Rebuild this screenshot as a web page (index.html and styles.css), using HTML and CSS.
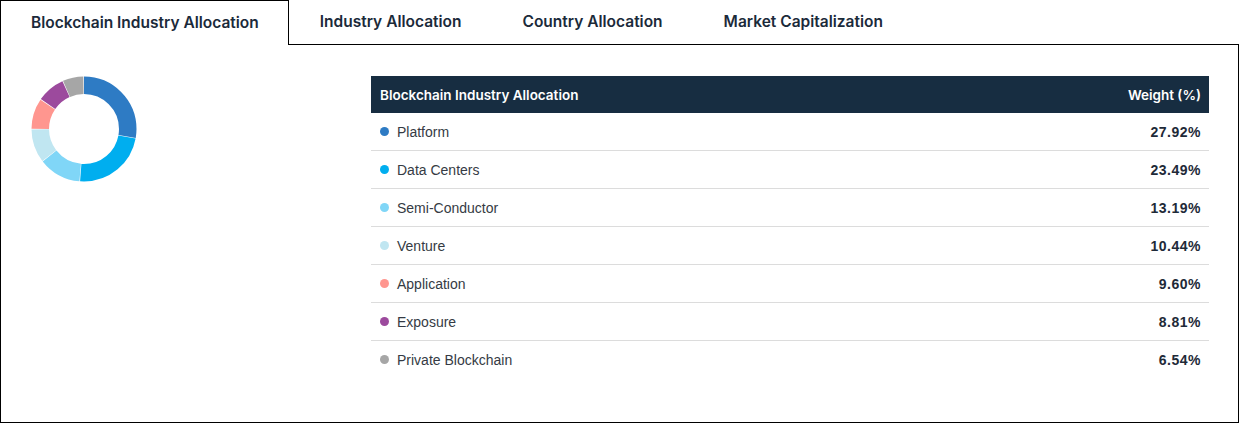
FILE: index.html
```html
<!DOCTYPE html>
<html>
  <head>
    <link rel="stylesheet" href="styles.css">
  </head>
  <body>
    <div class="tabs">
      <div class="tab active">Blockchain Industry Allocation</div>
      <div class="tab">Industry Allocation</div>
      <div class="tab">Country Allocation</div>
      <div class="tab">Market Capitalization</div>
      <div class="tabFill"></div>
    </div>
    <div class="panel">
      <div class="chart">
        <svg class="donut" width="106" height="106" viewBox="0 0 106 106">
          <g transform="rotate(-90 53 53)" fill="none" stroke-width="17.5">
            <circle cx="53" cy="53" r="43.75" pathLength="100" stroke="#2e7bc4" stroke-dasharray="27.72 100" stroke-dashoffset="0"/>
            <circle cx="53" cy="53" r="43.75" pathLength="100" stroke="#00aeef" stroke-dasharray="23.29 100" stroke-dashoffset="-27.92"/>
            <circle cx="53" cy="53" r="43.75" pathLength="100" stroke="#80d6f7" stroke-dasharray="12.99 100" stroke-dashoffset="-51.41"/>
            <circle cx="53" cy="53" r="43.75" pathLength="100" stroke="#c0e6f1" stroke-dasharray="10.24 100" stroke-dashoffset="-64.60"/>
            <circle cx="53" cy="53" r="43.75" pathLength="100" stroke="#ff968f" stroke-dasharray="9.40 100" stroke-dashoffset="-75.04"/>
            <circle cx="53" cy="53" r="43.75" pathLength="100" stroke="#9c4a9d" stroke-dasharray="8.61 100" stroke-dashoffset="-84.64"/>
            <circle cx="53" cy="53" r="43.75" pathLength="100" stroke="#a6a6a6" stroke-dasharray="6.34 100" stroke-dashoffset="-93.45"/>
          </g>
        </svg>
      </div>
      <div class="allocTable">
        <div class="headRow">
          <span>Blockchain Industry Allocation</span>
          <span>Weight (%)</span>
        </div>
        <div class="row"><span class="label"><i class="dot platform"></i>Platform</span><span class="value">27.92%</span></div>
        <div class="row"><span class="label"><i class="dot dataCenters"></i>Data Centers</span><span class="value">23.49%</span></div>
        <div class="row"><span class="label"><i class="dot semi"></i>Semi-Conductor</span><span class="value">13.19%</span></div>
        <div class="row"><span class="label"><i class="dot venture"></i>Venture</span><span class="value">10.44%</span></div>
        <div class="row"><span class="label"><i class="dot application"></i>Application</span><span class="value">9.60%</span></div>
        <div class="row"><span class="label"><i class="dot exposure"></i>Exposure</span><span class="value">8.81%</span></div>
        <div class="row"><span class="label"><i class="dot private"></i>Private Blockchain</span><span class="value">6.54%</span></div>
      </div>
    </div>
  </body>
</html>
```
FILE: styles.css
```css
body{
	margin: 0;
	width: 1239px;
	background-color: #fff;
	font-family: "Liberation Sans", Arial, sans-serif;
}

.tabs{
	display: flex;
	height: 45px;
}

.tab{
	padding: 0 30px 0 31px;
	height: 44px;
	line-height: 43px;
	border-bottom: 1px solid #000;
	font-family: Inter, sans-serif;
	font-weight: 600;
	font-size: 15.5px;
	color: #1b2a3a;
	white-space: nowrap;
}

.tab.active{
	padding: 0 29px 0 30px;
	height: 44px;
	line-height: 44px;
	border: 1px solid #000;
	border-bottom: none;
}

.tabFill{
	flex: 1;
	border-bottom: 1px solid #000;
}

.panel{
	display: grid;
	grid-template-columns: 340px 1fr;
	height: 346px;
	padding: 31px 29px 0 30px;
	border: 1px solid #000;
	border-top: none;
}

.donut{
	display: block;
}

.headRow{
	display: flex;
	justify-content: space-between;
	align-items: center;
	height: 37px;
	padding: 0 8px 0 9px;
	background-color: #172d41;
	color: #fff;
	font-family: Inter, sans-serif;
	font-weight: 600;
	font-size: 13.5px;
}

.row{
	display: flex;
	justify-content: space-between;
	align-items: center;
	height: 37px;
	padding: 0 8px 0 9px;
	border-bottom: 1px solid #dcdcdc;
}

.row:last-child{
	border-bottom: none;
}

.label{
	display: flex;
	align-items: center;
	font-size: 14px;
	color: #353b44;
}

.value{
	font-size: 14px;
	font-weight: bold;
	letter-spacing: 0.5px;
	color: #1e2a38;
}

.dot{
	width: 9px;
	height: 9px;
	border-radius: 50%;
	margin-right: 8px;
}

.platform{ background-color: #2e7bc4; }
.dataCenters{ background-color: #00aeef; }
.semi{ background-color: #80d6f7; }
.venture{ background-color: #c0e6f1; }
.application{ background-color: #ff968f; }
.exposure{ background-color: #9c4a9d; }
.private{ background-color: #a6a6a6; }
```
